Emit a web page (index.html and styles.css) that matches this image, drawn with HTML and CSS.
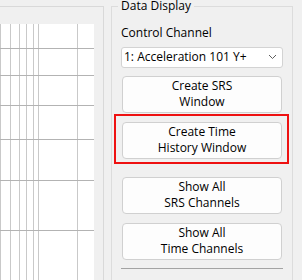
FILE: index.html
```html
<!DOCTYPE html>
<html>

<head>
    <title>Data Display</title>
    <link rel="stylesheet" href="styles.css">
</head>

<body>
    <div class="layout">
        <div class="plot-group">
            <div class="plot">
                <svg width="94" height="270" viewBox="0 0 94 270">
                    <g stroke="#c9c9c9" stroke-width="1">
                        <line x1="0.5" y1="0" x2="0.5" y2="270" />
                        <line x1="10.5" y1="0" x2="10.5" y2="270" />
                        <line x1="19.5" y1="0" x2="19.5" y2="270" />
                        <line x1="26.5" y1="0" x2="26.5" y2="270" />
                        <line x1="33.5" y1="0" x2="33.5" y2="270" />
                        <line x1="38.5" y1="0" x2="38.5" y2="270" />
                        <line x1="77.5" y1="0" x2="77.5" y2="270" />
                    </g>
                    <g stroke="#b3b3b3" stroke-width="1">
                        <line x1="0" y1="24.5" x2="94" y2="24.5" />
                        <line x1="0" y1="51.5" x2="94" y2="51.5" />
                        <line x1="0" y1="81.5" x2="94" y2="81.5" />
                        <line x1="0" y1="115.5" x2="94" y2="115.5" />
                        <line x1="0" y1="156.5" x2="94" y2="156.5" />
                        <line x1="0" y1="206.5" x2="94" y2="206.5" />
                    </g>
                </svg>
            </div>
        </div>

        <fieldset class="data-group">
            <legend>Data Display</legend>
            <div class="field-label">Control Channel</div>
            <div class="combo">
                <span>1: Acceleration 101 Y+</span>
                <svg class="chevron" width="9" height="6" viewBox="0 0 9 6">
                    <polyline points="1,1 4.5,4.5 8,1" fill="none" stroke="#5f5f5f" stroke-width="1" />
                </svg>
            </div>
            <button class="btn first">Create SRS<br>Window</button>
            <div class="highlight">
                <button class="btn">Create Time<br>History Window</button>
            </div>
            <button class="btn after-highlight">Show All<br>SRS Channels</button>
            <button class="btn">Show All<br>Time Channels</button>
            <div class="separator"></div>
            <div class="field-label next">Scaling</div>
        </fieldset>
    </div>
</body>

</html>
```

FILE: styles.css
```css
body {
    margin: 0;
    width: 302px;
    height: 280px;
    overflow: hidden;
    background-color: #f0f0f0;
    font-family: "Open Sans", "Noto Sans", sans-serif;
    font-size: 12px;
    color: #000;
}

.layout {
    display: flex;
    align-items: flex-start;
}

.plot-group {
    width: 104px;
    height: 300px;
    margin-top: 6px;
    padding: 17px 9px 0 0;
    box-sizing: border-box;
    border-top: 1px solid #d9d9d9;
    border-right: 1px solid #d9d9d9;
}

.plot {
    background-color: #fff;
    height: 270px;
}

.plot svg {
    display: block;
}

.data-group {
    width: 182px;
    height: 300px;
    margin: 0 0 0 7px;
    padding: 0 9px;
    box-sizing: border-box;
    min-width: 0;
    border: 1px solid #dcdcdc;
}

.data-group legend {
    line-height: 12px;
    padding: 0 3px;
    margin-left: -3px;
}

.field-label {
    line-height: 15px;
    margin-top: 13px;
}

.combo {
    display: flex;
    align-items: center;
    justify-content: space-between;
    height: 21px;
    margin-top: 7px;
    padding: 0 4px 1px 2px;
    box-sizing: border-box;
    background-color: #fff;
    border: 1px solid #d3d3d3;
    border-radius: 3px;
    line-height: 18px;
}

.chevron {
    display: block;
    margin-right: 1px;
}

.btn {
    display: block;
    width: 160px;
    height: 37px;
    margin: 9px 0 0 1px;
    padding: 1px 0 2px;
    box-sizing: border-box;
    background-color: #fdfdfd;
    border: 1px solid #d0d0d0;
    border-radius: 4px;
    font-family: inherit;
    font-size: 12px;
    line-height: 16px;
    color: #000;
    text-align: center;
}

.btn.first {
    margin-top: 8px;
}

.highlight {
    margin: 1px -6px 0 -7px;
    padding: 6px 5px 3px 6px;
    border: 2px solid #ee1111;
}

.highlight .btn {
    margin: 0;
}

.btn.after-highlight {
    margin-top: 13px;
}

.separator {
    height: 1px;
    margin-top: 8px;
    background-color: #a3a3a3;
}

.field-label.next {
    margin-top: 9px;
}
```
